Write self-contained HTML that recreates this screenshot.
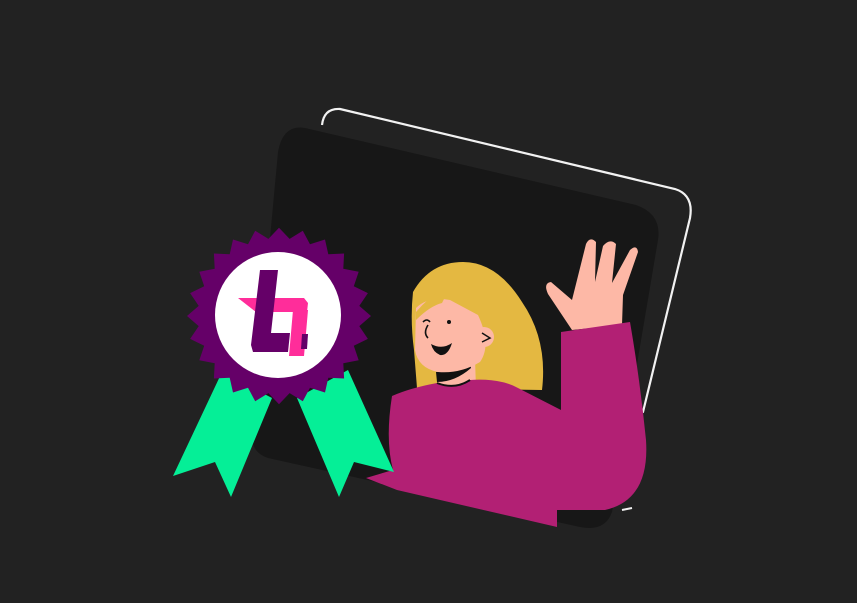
<!DOCTYPE html>
<html><head><meta charset="utf-8"><style>html,body{margin:0;padding:0;background:#222;}svg{display:block}</style></head>
<body>
<svg width="857" height="603" viewBox="0 0 857 603" xmlns="http://www.w3.org/2000/svg">
<rect width="857" height="603" fill="#222"/>
<path d="M340,109 L675,189 Q694,195 690,218 L643,412" fill="none" stroke="#f2f2f2" stroke-width="2.2" stroke-linecap="round"/>
<path d="M340,109 Q324,108 322,125" fill="none" stroke="#f2f2f2" stroke-width="2.2"/>
<path d="M632,508 L622,510" stroke="#f2f2f2" stroke-width="2"/>
<path d="M305,128 L636,205 Q662,214 658,240 L612,512 Q605,532 580,527 L268,458 Q250,452 252,432 L278,152 Q283,124 305,128 Z" fill="#171717"/>
<!-- hair -->
<path d="M463,262 Q430,262 413,292 Q410,320 414,350 L417,388 L542,390 Q548,340 522,302 Q497,262 463,262 Z" fill="#e4b841"/>
<path d="M437,360 L475,358 L476,390 L438,392 Z" fill="#fdb8a6"/>
<path d="M436,372 Q460,372 470,363 L471,368 Q455,382 437,382 Z" fill="#111"/>
<!-- face -->
<path d="M416,308 Q428,296 450,300 L478,315 Q492,345 480,362 Q460,374 438,372 Q418,368 415,350 Z" fill="#fdb8a6"/>
<path d="M416,312 Q428,298 440,291 L448,291 L442,303 Q430,306 416,320 Z" fill="#e4b841"/>
<circle cx="484" cy="337" r="10" fill="#fdb8a6"/>
<path d="M482,333 L490,338 L482,342" fill="none" stroke="#111" stroke-width="1.5"/>
<path d="M423,322 Q427,318 430,322 M428,325 Q423,333 428,338" fill="none" stroke="#111" stroke-width="1.6"/>
<circle cx="449" cy="322" r="2" fill="#111"/>
<path d="M431,344 Q442,350 452,343 Q448,356 440,355 Q433,352 431,344 Z" fill="#111"/>
<path d="M572,330 L548,294 Q543,283 551,282 L572,300 L586,244 Q590,236 596,242 L595,282 L603,246 Q610,238 616,244 L612,283 L630,250 Q637,244 638,252 L623,295 L622,325 Z" fill="#fdb8a6"/>
<path d="M392,396 Q410,388 437,383 Q455,390 470,380 Q500,378 518,388 L561,410 L561,332 L630,322 Q640,380 646,440 Q650,500 605,510 L557,510 L557,527 L397,490 L366,478 L393,470 Q385,440 392,396 Z" fill="#b22074"/>
<path d="M437,383 Q455,390 470,380" fill="none" stroke="#111" stroke-width="2"/>
<path d="M222,372 L272,398 L231,497 L215,462 L173,476 Z" fill="#05ef97"/>
<path d="M297,398 L348,370 L394,472 L354,462 L339,497 Z" fill="#05ef97"/>
<polygon id="star" fill="#650068" points=""/>
<circle cx="278" cy="315" r="63" fill="#fff"/>
<polygon points="238,298 304,298 308,303 307,312 256,312" fill="#ff2d9a"/>
<polygon points="293,310 308,310 304,356 289,356" fill="#ff2d9a"/>
<polygon points="260,270 278,270 271,333 290,333 288,352 253,352 251,345" fill="#650068"/>
<polygon points="302,334 308,334 307,349 301,349" fill="#650068"/>
</svg>
<script>
(function(){var cx=279,cy=316,n=24,ro=92,ri=81,p=[];for(var i=0;i<2*n;i++){var a=Math.PI*i/n-Math.PI/2;var r=i%2?ri:ro;p.push((cx+r*Math.cos(a)).toFixed(1)+','+(cy+r*0.96*Math.sin(a)).toFixed(1));}document.getElementById('star').setAttribute('points',p.join(' '));})();
</script>
</body></html>
